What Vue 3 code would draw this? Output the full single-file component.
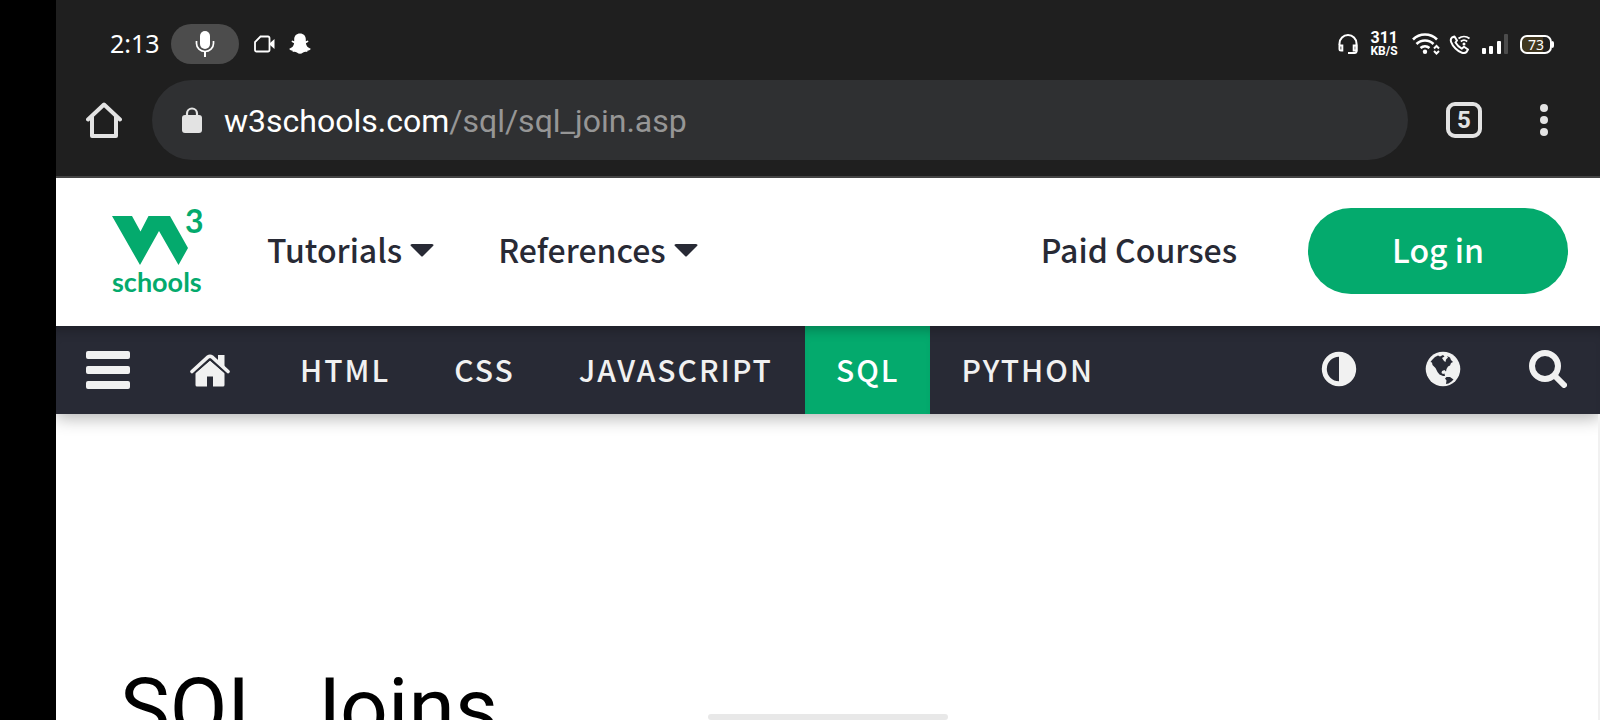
<script setup>
const topics = ['HTML', 'CSS', 'JAVASCRIPT', 'SQL', 'PYTHON']
const current = 'SQL'
</script>

<template>
  <div class="device">
    <div class="browser">
      <div class="status">
        <time class="clock">2:13</time>
        <span class="mic-pill">
          <svg width="20" height="28" viewBox="0 0 20 28" fill="none" stroke="#fff">
            <rect x="5" y="1" width="10" height="18" rx="5" fill="#fff" stroke="none" />
            <path d="M1.500 11v2.500a8.500 8 0 0 0 17 0V11" stroke-width="1.700" />
            <path d="M10 21.500V27" stroke-width="2" />
          </svg>
        </span>
        <svg class="cam" width="21" height="18" viewBox="0 0 21 18">
          <path d="M6.500 1.500H14a1.500 1.500 0 0 1 1.500 1.500v12a1.500 1.500 0 0 1-1.500 1.500H2.500A1.500 1.500 0 0 1 1 15V7z" fill="none" stroke="#fff" stroke-width="1.800" />
          <path d="M16 8l4.500-4v10L16 10z" fill="#fff" />
        </svg>
        <svg width="22" height="22" viewBox="0 0 22 22" fill="#fff">
          <path d="M11 .5c3.500 0 5.800 2.300 5.800 5.800v2l2-.8c.9.500.7 1.300-.1 1.800l-1.800 1c.3 2.700 2 4.600 4.800 5.400-.2 1.400-1.500 1.600-3 1.900l-.6 1.400c-1.500-.2-2.700-.3-4 .6-2 1.600-4.200 1.600-6.200 0-1.300-.9-2.500-.8-4-.6l-.6-1.400C1.800 17.300.5 17.100.3 15.700c2.800-.8 4.500-2.700 4.800-5.400l-1.800-1c-.8-.5-1-1.300-.1-1.800l2 .8v-2C5.200 2.800 7.500.5 11 .5z" />
        </svg>
        <div class="status-right">
          <svg width="20" height="20" viewBox="0 0 20 20" fill="none" stroke="#fff" stroke-width="2">
            <path d="M1.500 11V9.500a8.500 8.500 0 0 1 17 0V17a2 2 0 0 1-2 2H10" />
            <path d="M1.500 11.500h2.800v5H3a1.500 1.500 0 0 1-1.500-1.500zM18.500 11.500h-2.800v5h2.800z" />
          </svg>
          <span class="speed"><b>311</b><small>KB/S</small></span>
          <svg class="wifi" width="28" height="22" viewBox="0 0 28 22" fill="none" stroke="#fff" stroke-width="2.600">
            <path d="M1 6.500a17 17 0 0 1 24 0M4.500 11a12 12 0 0 1 17 0M8.500 15a7 7 0 0 1 9 0" />
            <circle cx="13" cy="18.800" r="2.200" fill="#fff" stroke="none" />
            <path d="M22 15.500l2.500-2.500 2.500 2.500M22 18l2.500 2.500L27 18" stroke-width="2" />
          </svg>
          <svg class="call" width="22" height="20" viewBox="0 0 22 20" fill="none" stroke="#fff" stroke-width="2">
            <path d="M5.500 2.500 3 3.500C.5 5.500 2 10 6.500 14.500S15.500 20 17.500 18l1.500-2.500-4-2.800-2.300 2C10.500 13.500 8 11 6.500 8.500L8 6.500z" stroke-linejoin="round" />
            <path d="M9.500 4.500a9 9 0 0 1 11 0M11.800 7.500a5 5 0 0 1 6.400 0" stroke-width="1.800" />
            <circle cx="15" cy="10" r="1.500" fill="#fff" stroke="none" />
          </svg>
          <svg class="bars" width="26" height="20" viewBox="0 0 26 20" fill="#fff">
            <rect x="0" y="14" width="4" height="6" rx="1" />
            <rect x="7" y="12" width="4" height="8" rx="1" />
            <rect x="15" y="7" width="4" height="13" rx="1" />
            <rect x="22" y="0" width="4" height="20" rx="1" fill="#4c4c4c" />
          </svg>
          <span class="battery">73</span>
        </div>
      </div>
      <div class="toolbar">
        <button class="plain" aria-label="Home page">
          <svg width="36" height="36" viewBox="0 0 36 36" fill="none" stroke="#e3e3e3" stroke-width="4" stroke-linejoin="round" stroke-linecap="round">
            <path d="M2 17.500 18 2.500 34 17.500" /><path d="M6 15v19h24V15" />
          </svg>
        </button>
        <div class="omnibox">
          <svg width="20" height="26" viewBox="0 0 20 26">
            <path d="M5 9V6.500a5 5 0 0 1 10 0V9" fill="none" stroke="#e3e3e3" stroke-width="2.200" />
            <rect y="8" width="20" height="18" rx="3" fill="#e3e3e3" />
          </svg>
          <a class="url" href="#url">w3schools.com<span>/sql/sql_join.asp</span></a>
        </div>
        <button class="plain tabs" aria-label="Open tabs">5</button>
        <button class="plain" aria-label="More options">
          <svg width="8" height="32" viewBox="0 0 8 32" fill="#e3e3e3">
            <circle cx="4" cy="4" r="4" /><circle cx="4" cy="16" r="4" /><circle cx="4" cy="28" r="4" />
          </svg>
        </button>
      </div>
    </div>

    <header class="site">
      <a class="logo" href="#home" aria-label="W3Schools">
        <span class="mark">
          <svg width="76" height="50" viewBox="0 0 76 50"><path d="M0 0H20L28.500 15.500 36.500 0H58L76 32 66.500 49 47 15 28 49z" fill="#04aa6d" /></svg>
          <b>3</b>
        </span>
        <span class="word">schools</span>
      </a>
      <a class="top-link" href="#tutorials">Tutorials
        <svg width="24" height="14" viewBox="0 0 24 14"><path d="M2 0H22Q24.500 .5 23 2L13 12Q12 13 11 12L1 2Q-.5 .5 2 0z" fill="#282a35" /></svg>
      </a>
      <a class="top-link" href="#references">References
        <svg width="24" height="14" viewBox="0 0 24 14"><path d="M2 0H22Q24.500 .5 23 2L13 12Q12 13 11 12L1 2Q-.5 .5 2 0z" fill="#282a35" /></svg>
      </a>
      <a class="top-link paid" href="#courses">Paid Courses</a>
      <button class="login">Log in</button>
    </header>

    <nav class="topics">
      <button class="plain menu" aria-label="Menu">
        <svg width="44" height="38" viewBox="0 0 44 38" fill="#f1f1f1">
          <rect width="44" height="8" rx="2" /><rect y="15" width="44" height="8" rx="2" /><rect y="30" width="44" height="8" rx="2" />
        </svg>
      </button>
      <a class="house" href="#home" aria-label="Home">
        <svg width="40" height="33" viewBox="0 0 40 33" fill="#f1f1f1">
          <path d="M20 6.500 34.500 19V31Q34.500 32.500 33 32.500H23V22.500H17V32.500H7Q5.500 32.500 5.500 31V19z" />
          <path d="M2 17.500 18 3Q20 1.500 22 3L38 17.500" fill="none" stroke="#f1f1f1" stroke-width="3.600" stroke-linecap="round" />
          <path d="M28 1H34.500V14L28 8z" />
          <path d="M3.500 20 20 5.500 36.500 20" fill="none" stroke="#282a35" stroke-width="1.300" />
        </svg>
      </a>
      <a v-for="t in topics" :key="t" class="topic" :class="{ active: t === current }" :href="'#' + t">{{ t }}</a>
      <div class="tools">
        <button class="plain" aria-label="Toggle dark mode">
          <svg width="36" height="36" viewBox="0 0 36 36"><circle cx="18" cy="18" r="14.700" fill="none" stroke="#f1f1f1" stroke-width="5" /><path d="M18 3a15 15 0 0 1 0 30z" fill="#f1f1f1" /></svg>
        </button>
        <button class="plain" aria-label="Translate">
          <svg width="36" height="36" viewBox="0 0 36 36">
            <circle cx="18" cy="18" r="17.300" fill="#f1f1f1" />
            <path d="M7 9 10 6 13 4.500 15 5.500 18 4 19.500 5.500 17 7 19 10 20.500 11 21 8.500 23 6.500 22 5 25 6.500 26 9 28 11 26 12 25 14.500 23 15.500 21.500 18 21 20.500 19.500 19 17 20 16.500 22 18 23 19.500 22.500 20 25 18 25 14.500 23.500 12.500 21 10.500 17 7.500 14 7 11.500 5.500 11z M21.500 26 25 26 28.500 28.500 26.500 30.500 23.500 32.500 21 33 21.500 29.500 20 27.500z" fill="#282a35" />
          </svg>
        </button>
        <button class="plain" aria-label="Search">
          <svg width="38" height="38" viewBox="0 0 38 38" fill="none" stroke="#f1f1f1"><circle cx="16" cy="16" r="13" stroke-width="6" /><path d="M26 26l9 9" stroke-width="6" stroke-linecap="round" /></svg>
        </button>
      </div>
    </nav>

    <main class="page">
      <h1>SQL Joins</h1>
    </main>
    <div class="gesture"></div>
  </div>
</template>

<style scoped>
.device {
  height: 100vh;
  box-sizing: border-box;
  border-left: 56px solid #000;
  background: #fff;
  display: flex;
  flex-direction: column;
  overflow: hidden;
  position: relative;
  font-family: Roboto, sans-serif;
}
.device svg { display: block; flex: none; }
.plain { background: none; border: 0; padding: 0; margin: 0; color: inherit; font: inherit; }
a { text-decoration: none; color: inherit; }
.browser { flex: none; background: #1f1f1f; border-bottom: 2px solid #444; }
.status { display: flex; align-items: center; color: #fff; padding: 24px 48px 0 54px; height: 40px; }
.clock { font: 25px/38px "Noto Sans", sans-serif; width: 61px; padding-bottom: 2px; }
.mic-pill { width: 68px; height: 40px; border-radius: 20px; background: #4c4c4c; display: grid; place-items: center; }
.cam { margin: 0 14px 0 15px; }
.status-right { margin-left: auto; display: flex; align-items: center; }
.speed { display: grid; margin: 0 14px 0 12px; }
.speed b { font: 700 16px/14px Roboto, sans-serif; }
.speed small { font: 700 12px/12px Roboto, sans-serif; }
.call { margin: 0 11px 0 9px; }
.bars { margin-right: 12px; }
.battery {
  position: relative;
  box-sizing: border-box;
  width: 32px;
  height: 19px;
  border: 2px solid #fff;
  border-radius: 7px;
  background: linear-gradient(90deg, #41371f 75%, #1f1f1f 75%);
  font: 14px/15px "Noto Sans", sans-serif;
  text-align: center;
}
.battery::after { content: ""; position: absolute; right: -4px; top: 4px; width: 2px; height: 7px; border-radius: 0 2px 2px 0; background: #fff; }
.toolbar { display: flex; align-items: center; padding: 16px 52px 16px 30px; color: #e3e3e3; }
.omnibox { flex: 1; height: 80px; margin: 0 38px 0 30px; padding-left: 30px; border-radius: 40px; background: #2f3032; display: flex; align-items: center; gap: 22px; }
.url { font-size: 32px; padding-top: 2px; color: #fff; }
.url span { color: #969696; }
.toolbar .tabs { box-sizing: border-box; width: 36px; height: 36px; border: 4px solid #e3e3e3; border-radius: 9px; margin-right: 58px; font: 700 24px/28px Roboto, sans-serif; }
.site { position: relative; z-index: 1; flex: none; height: 148px; box-sizing: border-box; display: flex; align-items: center; padding: 0 32px 2px 56px; background: #fff; color: #282a35; font-family: "Noto Sans CJK SC", sans-serif; }
.logo { color: #04aa6d; width: 92px; padding-top: 2px; margin-right: 63px; font-family: Lato, sans-serif; }
.mark { display: flex; align-items: flex-end; height: 60px; }
.mark b { font: 700 32px/34px Lato, sans-serif; margin: 0 0 28px -3px; }
.word { display: block; font: 700 27px/32px Lato, sans-serif; }
.top-link { display: flex; align-items: center; gap: 8px; padding-bottom: 4px; font-size: 32px; line-height: 48px; font-weight: 500; margin-right: 64px; white-space: nowrap; }
.top-link svg { margin-top: 4px; }
.paid { margin: 0 71px 0 auto; }
.login { width: 260px; height: 86px; padding: 0 0 4px; border: 0; border-radius: 43px; background: #04aa6d; color: #fff; font: 500 32px/48px "Noto Sans CJK SC", sans-serif; }
.topics {
  flex: none;
  height: 88px;
  display: flex;
  align-items: center;
  background: #282a35;
  color: #f1f1f1;
  box-shadow: 0 4px 16px rgba(0, 0, 0, .3), inset 0 12px 12px -8px rgba(0, 0, 0, .25);
  font-family: "Noto Sans CJK SC", sans-serif;
}
.menu { margin: 0 60px 0 30px; }
.house { margin-right: 38px; }
.topic { height: 88px; line-height: 86px; padding: 0 32px; font-size: 30px; font-weight: 500; letter-spacing: 2px; }
.topic.active { padding: 0 30px 0 31px; background: #04aa6d; color: #fff; box-shadow: inset 0 12px 12px -8px rgba(0, 0, 0, .25); }
.tools { margin-left: auto; display: flex; align-items: center; gap: 68px; padding: 0 33px 2px 0; }
.page { flex: 1; min-height: 0; padding: 245px 64px 0; border-right: 2px solid #f1f1f1; overflow: hidden; }
h1 { margin: 0; font: 400 84px/100px Roboto, sans-serif; color: #000; }
.gesture { position: absolute; left: calc(50% - 120px); bottom: 0; width: 240px; height: 6px; border-radius: 3px; background: #e8e8e8; }
</style>

<style>
body { margin: 0; background: #000; }
</style>
